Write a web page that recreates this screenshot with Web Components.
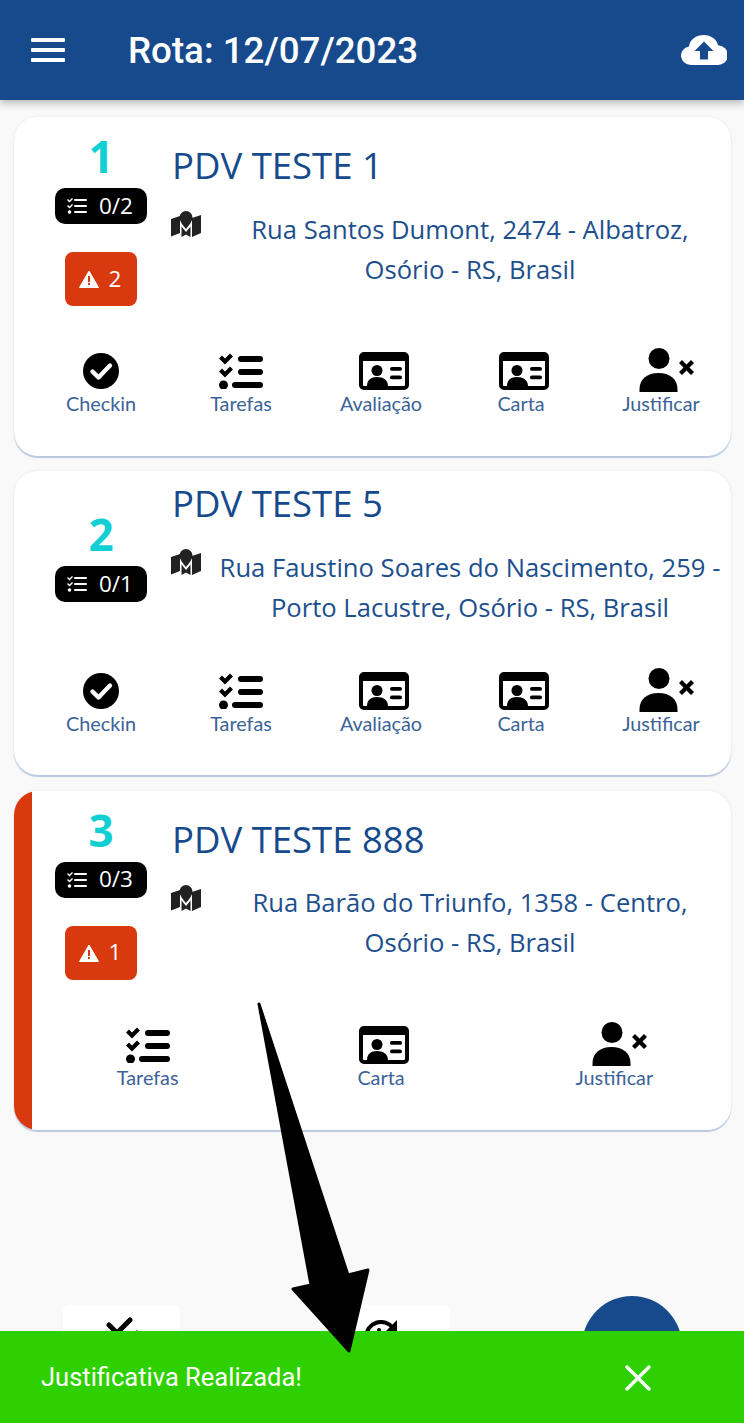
<!DOCTYPE html>
<html lang="pt-BR">
<head>
<meta charset="utf-8">
<title>Rota</title>
<style>
html, body { margin: 0; padding: 0; background: #f9f9f9; }
</style>
</head>
<body>

<rota-app>
    <rota-header slot="header" titulo="Rota: 12/07/2023"></rota-header>

    <pdv-card numero="1" nome="PDV TESTE 1" tarefas="0/2" alertas="2"
        acoes="checkin tarefas avaliacao carta justificar">
        Rua Santos Dumont, 2474 - Albatroz,<br>Osório - RS, Brasil
    </pdv-card>
    <pdv-card numero="2" nome="PDV TESTE 5" tarefas="0/1"
        acoes="checkin tarefas avaliacao carta justificar">
        Rua Faustino Soares do Nascimento, 259 -<br>Porto Lacustre, Osório - RS, Brasil
    </pdv-card>
    <pdv-card numero="3" nome="PDV TESTE 888" tarefas="0/3" alertas="1" marcado
        acoes="tarefas carta justificar">
        Rua Barão do Triunfo, 1358 - Centro,<br>Osório - RS, Brasil
    </pdv-card>

    <rota-toolbar slot="toolbar"></rota-toolbar>
    <rota-snackbar slot="snackbar">Justificativa Realizada!</rota-snackbar>
</rota-app>

<script>
// **************************************************************************** icons
const ICONS = {
    tarefas: `<svg viewBox="0 0 46 36" width="46" height="36" fill="#000">
        <path d="M1 5.500l3-3 3 3 5-5 3 3-8 8z"/>
        <path d="M1 18.500l3-3 3 3 5-5 3 3-8 8z"/>
        <circle cx="5.500" cy="32" r="4.500"/>
        <rect x="20" y="3" width="25" height="6" rx="3"/>
        <rect x="20" y="16" width="25" height="6" rx="3"/>
        <rect x="14" y="29" width="31" height="6" rx="3"/>
    </svg>`,
    carta: `<svg viewBox="0 0 50 38" width="50" height="38" style="margin-left:6px">
        <path fill="#000" fill-rule="evenodd" d="M5 0h40a5 5 0 0 1 5 5v28a5 5 0 0 1-5 5H5a5 5 0 0 1-5-5V5a5 5 0 0 1 5-5zM4 9v24a1 1 0 0 0 1 1h40a1 1 0 0 0 1-1V9z"/>
        <circle cx="18" cy="18.500" r="5.500" fill="#000"/>
        <path fill="#000" d="M8 34c0-6 4-9 10-9s11 3 11 9z"/>
        <rect x="31" y="15" width="12" height="3.800" rx="1.900" fill="#000"/>
        <rect x="31" y="23.500" width="12" height="3.800" rx="1.900" fill="#000"/>
    </svg>`,
    checkin: `<svg viewBox="0 0 36 36" width="36" height="36">
        <circle cx="18" cy="18" r="18" fill="#000"/>
        <path d="M9.500 18.500l6 6 11.500-12" fill="none" stroke="#fff" stroke-width="4.400" stroke-linecap="round" stroke-linejoin="round"/>
    </svg>`,
    justificar: `<svg viewBox="0 0 56 44" width="56" height="44" fill="#000" style="margin:-2px 0 0 12px">
        <circle cx="20" cy="10.500" r="10.500"/>
        <path d="M0.500 44v-3c0-10 8-16 19-16s19 6 19 16v3z"/>
        <path d="M40 15l3-3 4.500 4.500 4.500-4.500 3 3-4.500 4.500 4.500 4.500-3 3-4.500-4.500-4.500 4.500-3-3 4.500-4.500z"/>
    </svg>`
};
ICONS.avaliacao = ICONS.carta;

const LABELS = { checkin: "Checkin", tarefas: "Tarefas", avaliacao: "Avaliação", carta: "Carta", justificar: "Justificar" };

// **************************************************************************** <rota-app>
customElements.define('rota-app', class extends HTMLElement {
    connectedCallback() {
        this.attachShadow({ mode: 'open' }).innerHTML = `
            <style>
                :host { display: flex; flex-direction: column; position: relative; width: 744px; height: 1423px; overflow: hidden; background: #f9f9f9; }
                main { flex: 1; display: flex; flex-direction: column; gap: 15px; padding: 17px 13px 0 14px; }
                svg.seta { position: absolute; left: 0; top: 0; pointer-events: none; z-index: 5; }
            </style>
            <slot name="header"></slot>
            <main><slot></slot></main>
            <slot name="toolbar"></slot>
            <slot name="snackbar"></slot>
            <svg class="seta" width="744" height="1423" viewBox="0 0 744 1423">
                <path d="M259 1004 L348 1275 L368 1270 L349 1351 L293 1289 L311 1285 Z" fill="#000" stroke="#000" stroke-width="3" stroke-linejoin="round"/>
            </svg>`;
    }
});

// **************************************************************************** <rota-header>
customElements.define('rota-header', class extends HTMLElement {
    connectedCallback() {
        this.attachShadow({ mode: 'open' }).innerHTML = `
            <style>
                :host { display: flex; align-items: center; height: 100px; box-sizing: border-box; padding: 0 17px 0 31px; background: #164a8c; color: #fff; box-shadow: 0 3px 8px rgba(0,0,0,.28); position: relative; z-index: 2; }
                .menu { display: flex; flex-direction: column; gap: 6px; width: 34px; margin-right: 63px; }
                .menu i { display: block; height: 4px; background: #fff; border-radius: 1px; }
                h1 { flex: 1; margin: 2px 0 0; font: 500 36.700px/1 Roboto, sans-serif; }
            </style>
            <div class="menu"><i></i><i></i><i></i></div>
            <h1>${this.getAttribute('titulo')}</h1>
            <svg viewBox="0 0 46 32" width="46" height="30" preserveAspectRatio="none">
                <path fill="#fff" d="M10 32a10 10 0 0 1-2-19.800A15 13 0 0 1 23 0a14 13 0 0 1 14 11a10.500 10.500 0 0 1-1 21z"/>
                <path fill="#164a8c" d="M23 7l9.500 10H27v9h-8v-9h-5.500z"/>
            </svg>`;
    }
});

// **************************************************************************** <pdv-card>
customElements.define('pdv-card', class extends HTMLElement {
    connectedCallback() {
        const acoes = this.getAttribute('acoes').split(' ');
        const alertas = this.getAttribute('alertas');
        // -------------------------------------------------------------------- inject HTML
        this.attachShadow({ mode: 'open' }).innerHTML = `
            <style>
                :host { display: block; box-sizing: border-box; background: #fff; border-radius: 24px; padding-left: 18px; overflow: hidden; box-shadow: 0 2px 1px #b9c8e0, 0 0 3px rgba(120,140,180,.15); color: #164a8c; }
                :host([marcado]) { margin-top: 1px; background: linear-gradient(to right, #d8390f 18px, #fff 18px); }
                .topo { display: flex; align-items: center; padding-top: 13px; margin-bottom: 39px; }
                .topo.alerta { margin-bottom: 41px; }
                .esq { width: 140px; margin-left: -1px; flex: none; display: flex; flex-direction: column; align-items: center; padding-bottom: 2px; }
                .topo.alerta .esq { padding-bottom: 0; }
                .num { font: 700 44px/52px "Open Sans", sans-serif; color: #12cfd3; margin-bottom: 4px; }
                .badge { display: flex; align-items: center; justify-content: center; box-sizing: border-box; color: #fff; font: 400 22.500px/1 "Open Sans", sans-serif; }
                .tar { height: 36px; padding: 0 14px 0 12px; gap: 12px; margin-top: 2px; background: #000; border-radius: 10px; }
                .ale { height: 54px; padding: 0 16px 0 14px; margin-top: 28px; background: #d8390f; border-radius: 8px; gap: 10px; }
                .dir { flex: 1; min-width: 0; }
                h2 { margin: -1px 0 25px 1px; font: 400 36.500px/40px "Open Sans", sans-serif; }
                .end { display: flex; align-items: flex-start; }
                .end svg { flex: none; margin-top: 1px; }
                address { flex: 1; font: 400 25.600px/40px "Open Sans", sans-serif; text-align: center; color: #1d4f8e; margin: -.5px 0 0 8px; white-space: nowrap; }
                .acoes { display: flex; margin-left: -1px; padding-bottom: 42px; }
                .topo.alerta + .acoes { padding-bottom: 43px; }
                .acao { flex: 1; display: flex; flex-direction: column; align-items: center; }
                .ico { height: 48px; display: flex; align-items: center; justify-content: center; }
                .lbl { margin: -1px 0 1px; font: 400 19.800px/18px Lato, sans-serif; color: #3b6397; }
            </style>
            <div class="topo ${alertas ? 'alerta' : ''}">
                <div class="esq">
                    <div class="num">${this.getAttribute('numero')}</div>
                    <div class="badge tar">
                        <svg viewBox="0 0 20 16" width="20" height="16" fill="#fff">
                            <path d="M0 2l1-1 1.500 1.500L5 0l1 1-3.500 3.500z"/>
                            <path d="M0 8l1-1 1.500 1.500L5 6l1 1-3.500 3.500z"/>
                            <circle cx="2.500" cy="14" r="1.800"/>
                            <rect x="7" y="1" width="13" height="2" rx="1"/>
                            <rect x="7" y="7" width="13" height="2" rx="1"/>
                            <rect x="7" y="13" width="13" height="2" rx="1"/>
                        </svg>
                        <span>${this.getAttribute('tarefas')}</span>
                    </div>
                    ${alertas ? `<div class="badge ale">
                        <svg viewBox="0 0 20 18" width="20" height="18">
                            <path fill="#fff" d="M10 1l9.500 16.500H0.500z" stroke="#fff" stroke-width="1" stroke-linejoin="round"/>
                            <rect x="9" y="6" width="2" height="6" fill="#d8390f"/>
                            <rect x="9" y="13" width="2" height="2" fill="#d8390f"/>
                        </svg>
                        <span>${alertas}</span>
                    </div>` : ''}
                </div>
                <div class="dir">
                    <h2>${this.getAttribute('nome')}</h2>
                    <div class="end">
                        <svg viewBox="0 0 30 26" width="30" height="26" fill="#222">
                            <path d="M0 8l9-3v17l-9 3.500z"/>
                            <path d="M21 7l9-3v18l-9 4z"/>
                            <path d="M15 0a6.500 6.500 0 0 1 6.500 6.500c0 4-4 8.500-6.500 11.500-2.500-3-6.500-7.500-6.500-11.500a6.500 6.500 0 0 1 6.500-6.500z"/>
                            <path d="M10.500 15.500l4.500 5.500 4.500-5.500v10.500l-4.500-2.500-4.500 2.500z"/>
                        </svg>
                        <address><slot></slot></address>
                    </div>
                </div>
            </div>
            <div class="acoes">
                ${acoes.map(a => `<div class="acao"><div class="ico">${ICONS[a]}</div><div class="lbl">${LABELS[a]}</div></div>`).join('')}
            </div>`;
    }
});

// **************************************************************************** <rota-toolbar>
customElements.define('rota-toolbar', class extends HTMLElement {
    connectedCallback() {
        this.attachShadow({ mode: 'open' }).innerHTML = `
            <style>
                :host { display: flex; align-items: flex-start; height: 118px; padding-left: 63px; }
                .bt { height: 118px; background: #fff; border-radius: 6px; display: flex; box-sizing: border-box; }
                .a { width: 117px; padding: 12px 0 0 43px; }
                .b { width: 95px; margin-left: 175px; padding: 15px 0 0 8px; }
                .fab { width: 100px; height: 100px; margin: -9px 0 0 132px; border-radius: 50%; background: #164a8c; }
            </style>
            <div class="bt a">
                <svg viewBox="0 0 34 20" width="34" height="20">
                    <path d="M3 8l8 8L24 3" fill="none" stroke="#000" stroke-width="5" stroke-linecap="round"/>
                    <circle cx="31" cy="16" r="2.500"/>
                </svg>
            </div>
            <div class="bt b">
                <svg viewBox="0 0 36 20" width="36" height="20">
                    <path d="M3 17A15 15 0 0 1 30 8" fill="none" stroke="#000" stroke-width="4"/>
                    <path d="M34 0v11H23z"/>
                    <circle cx="16" cy="10" r="2"/>
                </svg>
            </div>
            <div class="fab"></div>`;
    }
});

// **************************************************************************** <rota-snackbar>
customElements.define('rota-snackbar', class extends HTMLElement {
    connectedCallback() {
        this.attachShadow({ mode: 'open' }).innerHTML = `
            <style>
                :host { position: absolute; left: 0; right: 0; bottom: 0; height: 92px; z-index: 3; display: flex; align-items: center; justify-content: space-between; box-sizing: border-box; padding: 2px 93px 0 41px; background: #2fd000; color: #fff; font: 400 25.500px/1 Roboto, sans-serif; }
            </style>
            <span><slot></slot></span>
            <svg viewBox="0 0 26 26" width="26" height="26"><path d="M2 2l22 22M24 2L2 24" stroke="#fff" stroke-width="3.400" stroke-linecap="round"/></svg>`;
    }
});
</script>
</body>
</html>
